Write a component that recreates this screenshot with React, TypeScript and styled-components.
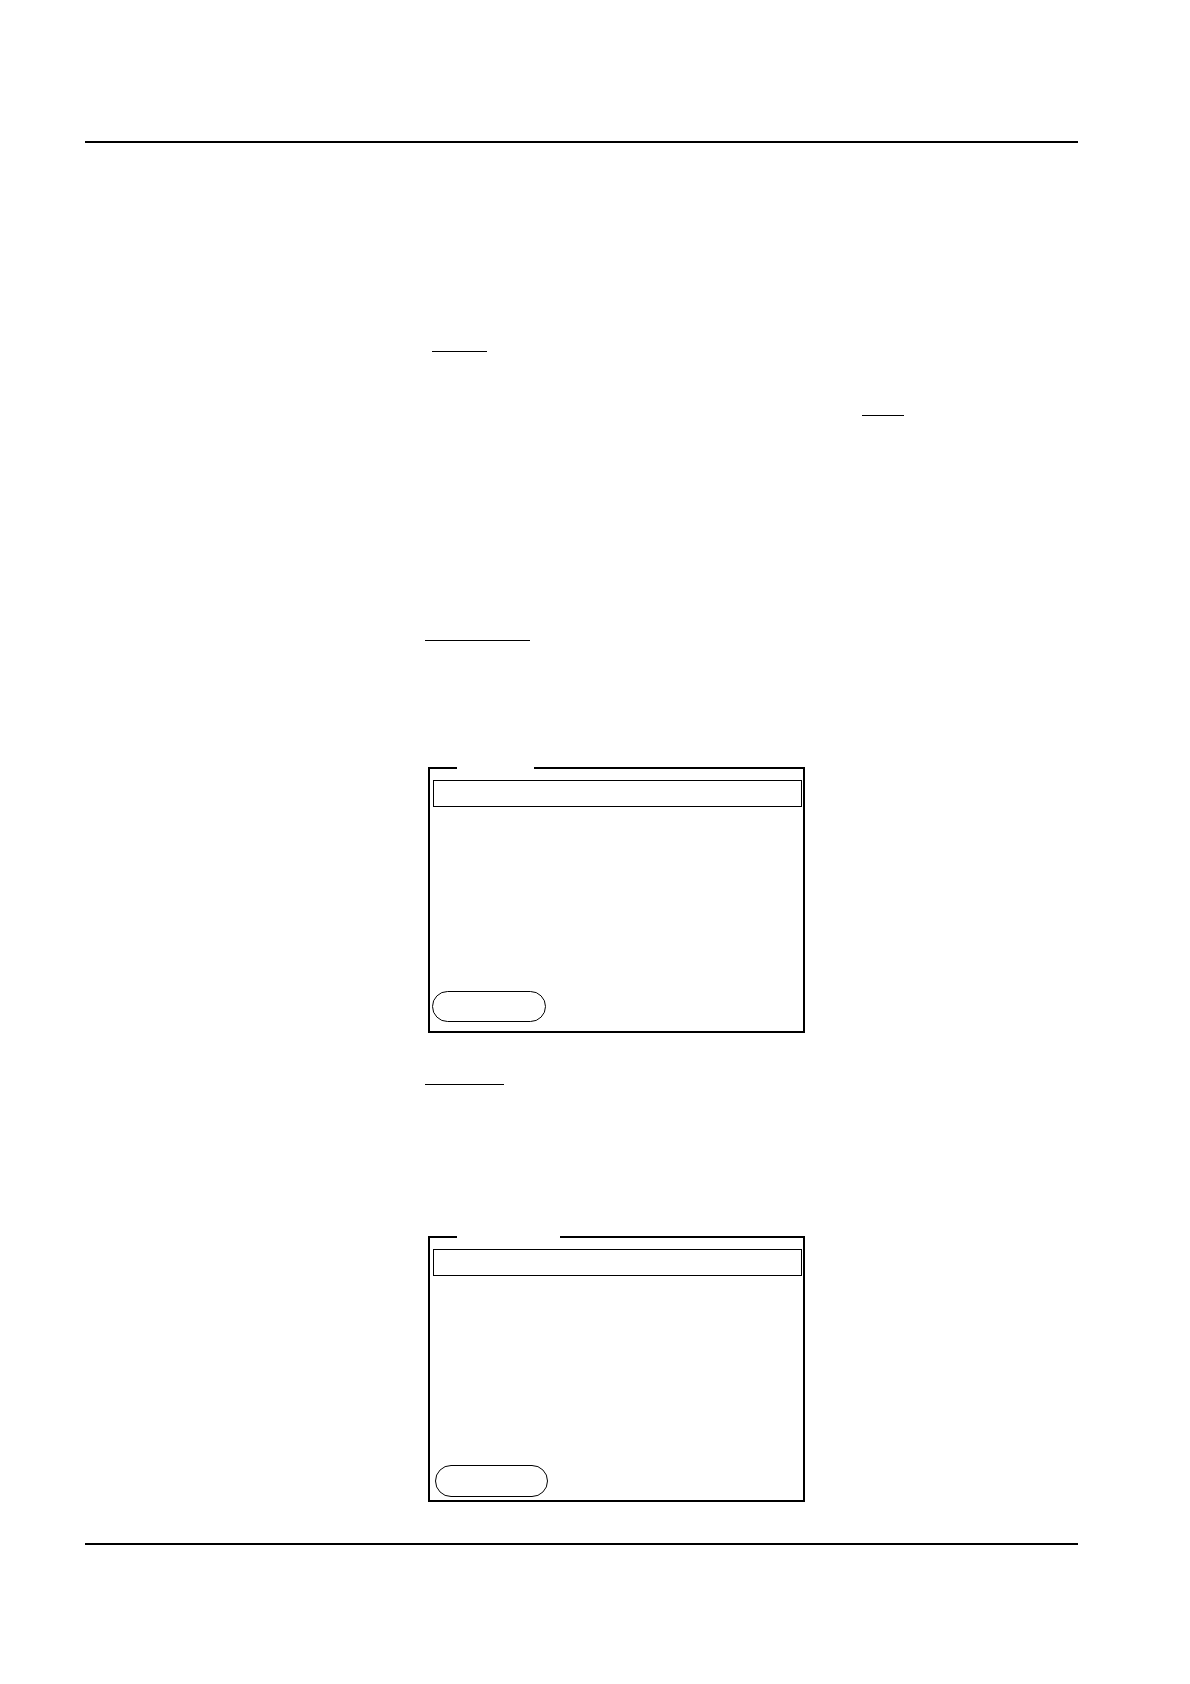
import styled, { createGlobalStyle } from 'styled-components';

const GlobalStyle = createGlobalStyle`
  html, body {
    margin: 0;
    padding: 0;
    background: #FFF;
  }

  body {
    font-family: "Liberation Sans", Arial, sans-serif;
    color: #000;
  }
`;

const Page = styled.div`
  box-sizing: border-box;
  width: 1190px;
  min-height: 1684px;
  padding: 141px 0 0 85px;
`;

const Rule = styled.hr<{ $gap?: number }>`
  width: 993px;
  margin: ${p => p.$gap ?? 0}px 0 0;
  border: none;
  border-top: 2px solid #000;
`;

const Main = styled.main`
  margin-left: 340px;
  display: flex;
  flex-direction: column;
  align-items: flex-start;
`;

const Underline = styled.span<{ $width: number; $indent?: number; $gap: number }>`
  display: block;
  width: ${p => p.$width}px;
  height: 0;
  margin: ${p => p.$gap}px 0 0 ${p => p.$indent ?? 0}px;
  border-top: 1.5px solid #000;
`;

const Screen = styled.section<{ $gap: number }>`
  position: relative;
  box-sizing: border-box;
  width: 377px;
  height: 266px;
  margin: ${p => p.$gap}px 0 0 3px;
  padding: 11px 1px 0 0;
  border: 2px solid #000;
  display: flex;
  flex-direction: column;
`;

const TitleGap = styled.span<{ $width: number }>`
  position: absolute;
  top: -2px;
  left: 27px;
  width: ${p => p.$width}px;
  height: 2px;
  background: #FFF;
`;

const StatusBar = styled.div`
  box-sizing: border-box;
  height: 27px;
  margin-left: 3px;
  border: 1px solid #000;
`;

const SoftKey = styled.div<{ $left: number; $bottom: number; $width: number; $height: number }>`
  box-sizing: border-box;
  margin: auto 0 ${p => p.$bottom}px ${p => p.$left}px;
  width: ${p => p.$width}px;
  height: ${p => p.$height}px;
  border: 1px solid #000;
  border-radius: 16px;
`;

export default function App() {
  return (
    <>
      <GlobalStyle />
      <Page>
        <Rule />
        <Main>
          <Underline $width={55} $indent={7} $gap={208} />
          <Underline $width={42} $indent={437} $gap={62.5} />
          <Underline $width={105} $gap={224.5} />

          <Screen $gap={125.5}>
            <TitleGap $width={77} />
            <StatusBar />
            <SoftKey $left={2} $bottom={9} $width={114} $height={31} />
          </Screen>

          <Underline $width={79} $gap={51} />

          <Screen $gap={151.5}>
            <TitleGap $width={103} />
            <StatusBar />
            <SoftKey $left={5} $bottom={3} $width={113} $height={32} />
          </Screen>
        </Main>
        <Rule $gap={41} />
      </Page>
    </>
  );
}
